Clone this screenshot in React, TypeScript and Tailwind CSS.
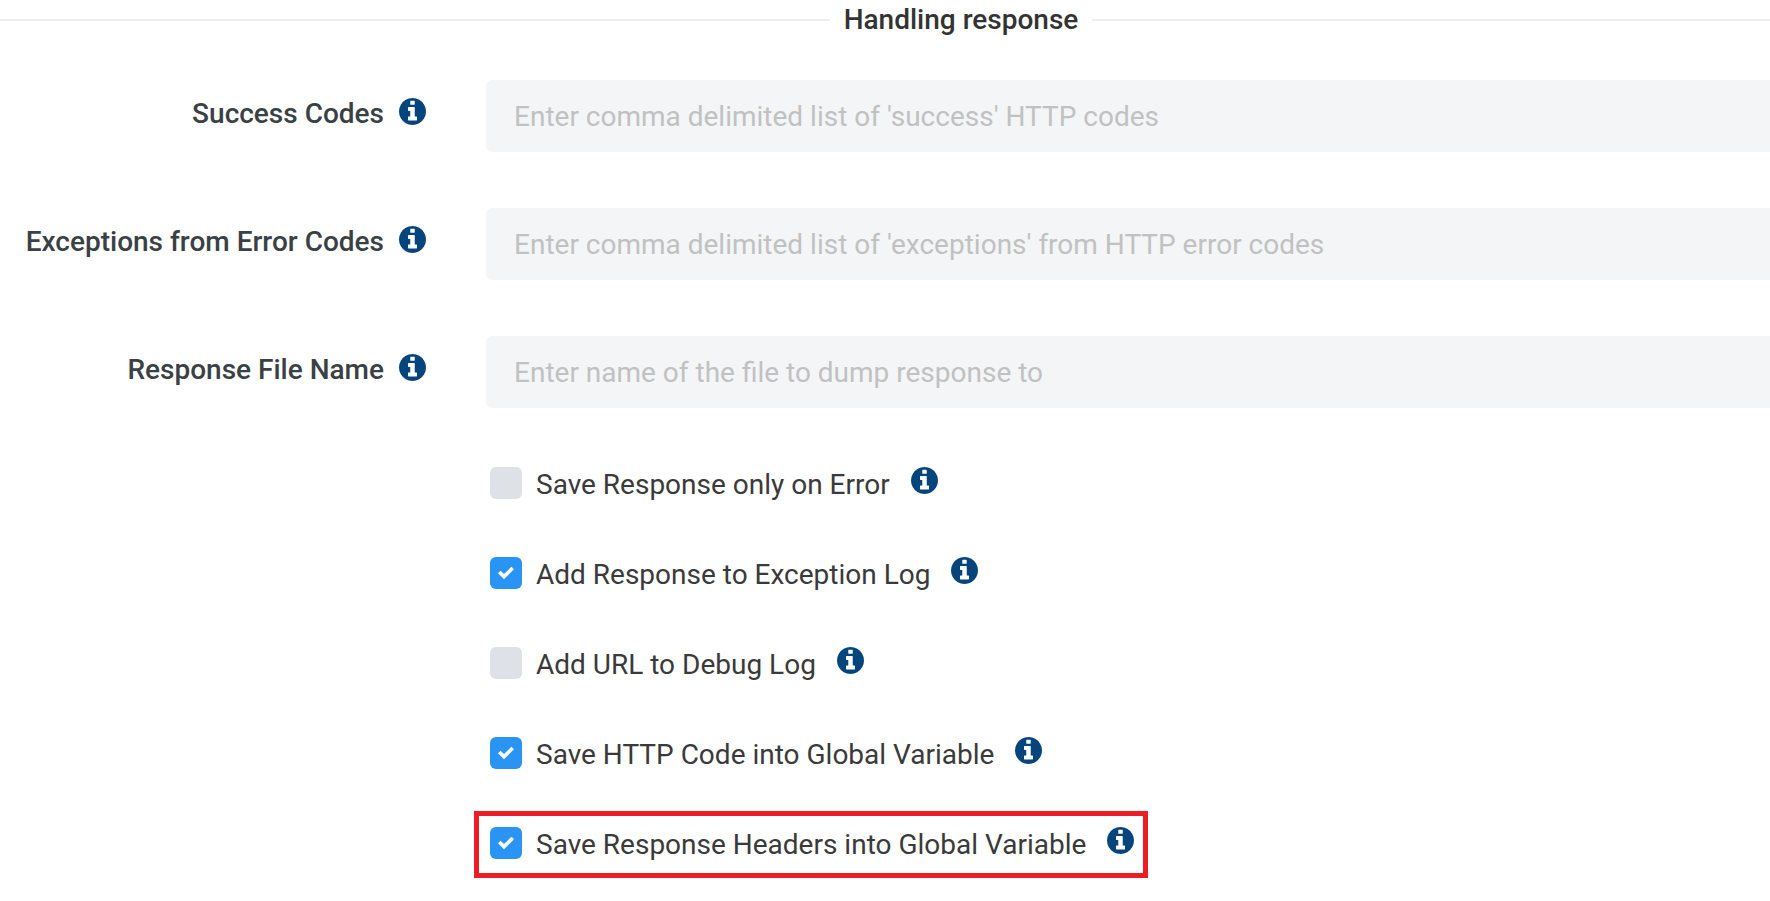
import { useState } from "react";

const fields = [
  {
    id: "success-codes",
    label: "Success Codes",
    placeholder: "Enter comma delimited list of 'success' HTTP codes",
  },
  {
    id: "exception-codes",
    label: "Exceptions from Error Codes",
    placeholder: "Enter comma delimited list of 'exceptions' from HTTP error codes",
  },
  {
    id: "response-file",
    label: "Response File Name",
    placeholder: "Enter name of the file to dump response to",
  },
];

const initialOptions = [
  { id: "save-on-error", label: "Save Response only on Error", checked: false },
  { id: "add-to-log", label: "Add Response to Exception Log", checked: true },
  { id: "add-url", label: "Add URL to Debug Log", checked: false },
  { id: "save-code", label: "Save HTTP Code into Global Variable", checked: true },
  {
    id: "save-headers",
    label: "Save Response Headers into Global Variable",
    checked: true,
    highlighted: true,
  },
];

const InfoButton = ({ about }: { about: string }) => (
  <button type="button" aria-label={`About ${about}`} className="mb-1 shrink-0 text-[#06457c]">
    <svg viewBox="128 128 1536 1536" className="size-[27px]" fill="currentColor">
      <path d="M1152 1376v-160q0-14-9-23t-23-9h-96v-512q0-14-9-23t-23-9h-320q-14 0-23 9t-9 23v160q0 14 9 23t23 9h96v320h-96q-14 0-23 9t-9 23v160q0 14 9 23t23 9h448q14 0 23-9t9-23zM1024 480v-160q0-14-9-23t-23-9h-192q-14 0-23 9t-9 23v160q0 14 9 23t23 9h192q14 0 23-9t9-23zM1664 896q0 209-103 385.5t-279.5 279.5-385.5 103-385.5-103-279.5-279.5-103-385.5 103-385.5 279.5-279.5 385.5-103 385.5 103 279.5 279.5 103 385.5z" />
    </svg>
  </button>
);

const Field = ({ id, label, placeholder }: any) => (
  <div className="flex items-center">
    <div className="flex h-16 w-[486px] shrink-0 items-center justify-end gap-[15px] pr-[60px] pb-1.5">
      <label htmlFor={id} className="pt-0.5 font-medium whitespace-nowrap text-[#3a4144]">
        {label}
      </label>
      <InfoButton about={label} />
    </div>
    <input
      id={id}
      type="text"
      placeholder={placeholder}
      className="h-[72px] min-w-0 flex-1 rounded-md bg-[#f4f5f7] px-7 text-[#3a4144] outline-none placeholder:text-[#c1c1c1]"
    />
  </div>
);

const Option = ({ id, label, checked, highlighted, onChange }: any) => (
  <div
    className={`flex h-[67px] w-fit items-center border-5 pr-[9px] pb-1 pl-[11px] ${
      highlighted ? "border-[#ee1c25]" : "border-transparent"
    }`}
  >
    <span className="grid shrink-0">
      <input
        id={id}
        type="checkbox"
        checked={checked}
        onChange={onChange}
        className="col-start-1 row-start-1 size-8 appearance-none rounded-md bg-[#dee1e6] checked:bg-[#2a94f4]"
      />
      {checked && (
        <svg
          viewBox="0 0 32 32"
          className="pointer-events-none col-start-1 row-start-1 size-8"
          fill="#fff"
        >
          <path d="M8 16.3 10.5 13.8 14 17 21.5 9.7 24 12.3 14 22.3Z" />
        </svg>
      )}
    </span>
    <label htmlFor={id} className="pt-1 pr-[21px] pl-[14px] text-[#3a3a3a]">
      {label}
    </label>
    <InfoButton about={label} />
  </div>
);

const App = () => {
  const [options, setOptions] = useState(initialOptions);

  const toggle = (id: string) => {
    setOptions(options.map((o) => (o.id === id ? { ...o, checked: !o.checked } : o)));
  };

  return (
    <main className="overflow-hidden bg-white font-[Roboto,sans-serif] text-[28px] leading-10">
      {/* the form runs past the right edge of the panel */}
      <form className="-mr-38">
        <div className="flex items-center gap-[14px]">
          <span className="h-[2px] flex-1 bg-[#eee]" />
          <h2 className="font-medium text-[#333]">Handling response</h2>
          <span className="h-[2px] flex-1 bg-[#eee]" />
        </div>

        <div className="flex flex-col gap-14 pt-10">
          {fields.map((field) => (
            <Field key={field.id} {...field} />
          ))}
        </div>

        <div className="flex flex-col gap-[23px] pt-[43px] pl-[474px]">
          {options.map((option) => (
            <Option key={option.id} {...option} onChange={() => toggle(option.id)} />
          ))}
        </div>
      </form>
    </main>
  );
};

export default App;
